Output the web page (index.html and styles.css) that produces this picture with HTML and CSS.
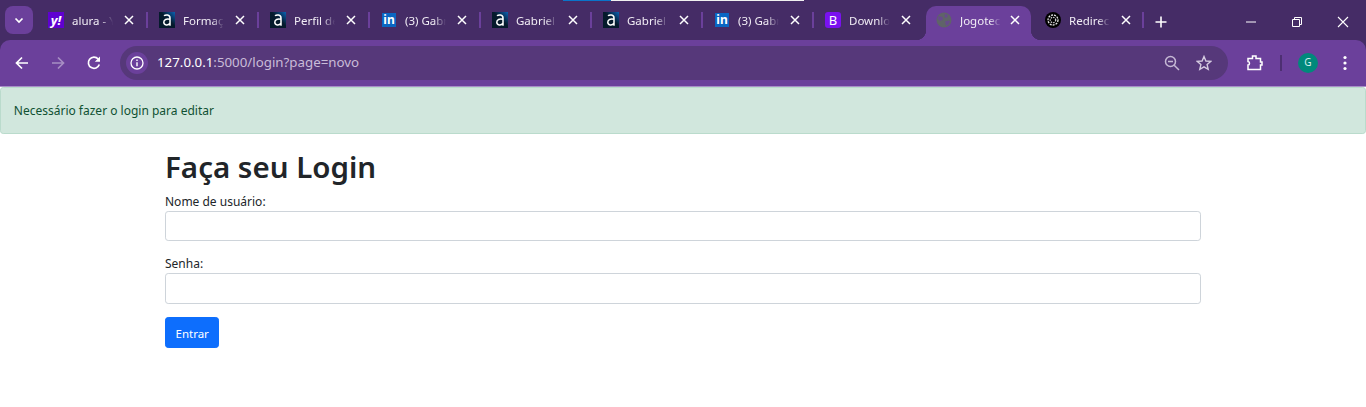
FILE: index.html
```html
<!DOCTYPE html>
<html>
<head>
  <meta charset="utf-8">
  <title>Jogoteca</title>
  <link rel="stylesheet" href="styles.css">
</head>
<body>
  <svg class="sprites" width="0" height="0">
    <defs>
      <linearGradient id="alura-bg" x1="0" y1="1" x2="1" y2="0">
        <stop offset="0.55" stop-color="#051a2c"/>
        <stop offset="1" stop-color="#0c62b4"/>
      </linearGradient>
      <symbol id="alura" viewBox="0 0 16 16">
        <rect width="16" height="16" fill="url(#alura-bg)"/>
        <path d="M5 3.800C6.500 2.500 11 2.300 11 6v7.800M11 7.300C7.500 6.500 4.800 7.500 4.800 10.300c0 3.200 4.400 3.400 6.200 1" fill="none" stroke="#fff" stroke-width="1.500"/>
      </symbol>
      <symbol id="close" viewBox="0 0 10 10">
        <path d="M1 1l8 8M9 1l-8 8" fill="none" stroke="#fff" stroke-width="1.500"/>
      </symbol>
    </defs>
  </svg>

  <header class="browser">
    <div class="tabstrip">
      <div class="other-window"><span class="other-blue"></span><span class="other-white"></span></div>
      <button class="tab-search">
        <svg width="12" height="12" viewBox="0 0 12 12"><path d="M2.500 4.500 6 8l3.500-3.500" fill="none" stroke="#fff" stroke-width="1.700"/></svg>
      </button>
      <div class="tabs">
        <div class="tab sep">
          <span class="favicon fav-yahoo">y!</span><span class="tab-title">alura - Y</span>
          <svg class="tab-close" width="10" height="10"><use href="#close"/></svg>
        </div>
        <div class="tab sep">
          <svg class="favicon" width="16" height="16"><use href="#alura"/></svg><span class="tab-title">Formaçã</span>
          <svg class="tab-close" width="10" height="10"><use href="#close"/></svg>
        </div>
        <div class="tab sep">
          <svg class="favicon" width="16" height="16"><use href="#alura"/></svg><span class="tab-title">Perfil de</span>
          <svg class="tab-close" width="10" height="10"><use href="#close"/></svg>
        </div>
        <div class="tab sep">
          <span class="favicon fav-in">in</span><span class="tab-title">(3) Gabr</span>
          <svg class="tab-close" width="10" height="10"><use href="#close"/></svg>
        </div>
        <div class="tab sep">
          <svg class="favicon" width="16" height="16"><use href="#alura"/></svg><span class="tab-title">Gabriel</span>
          <svg class="tab-close" width="10" height="10"><use href="#close"/></svg>
        </div>
        <div class="tab sep">
          <svg class="favicon" width="16" height="16"><use href="#alura"/></svg><span class="tab-title">Gabriel</span>
          <svg class="tab-close" width="10" height="10"><use href="#close"/></svg>
        </div>
        <div class="tab sep">
          <span class="favicon fav-in">in</span><span class="tab-title">(3) Gabr</span>
          <svg class="tab-close" width="10" height="10"><use href="#close"/></svg>
        </div>
        <div class="tab">
          <span class="favicon fav-boot">B</span><span class="tab-title">Downlo</span>
          <svg class="tab-close" width="10" height="10"><use href="#close"/></svg>
        </div>
        <div class="tab active">
          <svg class="favicon" width="16" height="16" viewBox="0 0 16 16"><circle cx="8" cy="8" r="7.500" fill="#5f6368"/><path d="M2.500 4 6.500 5 7 7.500 4.500 9 1.500 7ZM9 2l3 1-1.500 3-2-1ZM9 9.500l4-1 1 1-2 3.500-2 .5Z" fill="#6b409b" opacity=".7"/></svg>
          <span class="tab-title">Jogotec</span>
          <svg class="tab-close" width="10" height="10"><use href="#close"/></svg>
        </div>
        <div class="tab sep last">
          <svg class="favicon" width="16" height="16" viewBox="0 0 16 16"><circle cx="8" cy="8" r="8" fill="#000"/><circle cx="8" cy="8" r="5" fill="none" stroke="#e4e4e4" stroke-width="1.300" stroke-dasharray="2 1"/><circle cx="8" cy="8" r="2.700" fill="none" stroke="#ccc" stroke-width="1.300" stroke-dasharray="1.500 1"/></svg>
          <span class="tab-title">Redirec</span>
          <svg class="tab-close" width="10" height="10"><use href="#close"/></svg>
        </div>
      </div>
      <svg class="new-tab" width="12" height="12" viewBox="0 0 12 12"><path d="M6 .5v11M.5 6h11" stroke="#fff" stroke-width="1.600"/></svg>
      <div class="window-controls">
        <svg width="12" height="12" viewBox="0 0 12 12"><path d="M1 6h10" stroke="#fff"/></svg>
        <svg width="12" height="12" viewBox="0 0 12 12"><path d="M1.500 3.500h7v7h-7zM3.500 3.500v-2h7v7h-2" fill="none" stroke="#fff"/></svg>
        <svg width="12" height="12" viewBox="0 0 12 12"><path d="M1 1l10 10M11 1 1 11" stroke="#fff" stroke-width="1.100"/></svg>
      </div>
    </div>
    <div class="toolbar">
      <div class="nav-buttons">
        <svg width="16" height="16" viewBox="0 0 16 16"><path d="M14 8H3M8 2.500 2.500 8 8 13.500" fill="none" stroke="#fff" stroke-width="1.700"/></svg>
        <svg width="16" height="16" viewBox="0 0 16 16"><path d="M2 8h11M8 2.500 13.500 8 8 13.500" fill="none" stroke="#a78ec4" stroke-width="1.700"/></svg>
        <svg width="16" height="16" viewBox="0 0 16 16"><path d="M13.300 9.500A5.600 5.600 0 1 1 12.200 4" fill="none" stroke="#fff" stroke-width="1.700"/><path d="M14 1.500v5.200H8.800Z" fill="#fff"/></svg>
      </div>
      <div class="omnibox">
        <span class="site-info">
          <svg width="14" height="14" viewBox="0 0 14 14"><circle cx="7" cy="7" r="6" fill="none" stroke="#fff" stroke-width="1.300"/><path d="M7 6.200v4M7 3.600v1.400" stroke="#fff" stroke-width="1.400"/></svg>
        </span>
        <span class="url"><span class="url-host">127.0.0.1</span>:5000/login?page=novo</span>
        <span class="omni-icons">
          <svg width="16" height="16" viewBox="0 0 16 16"><circle cx="6.500" cy="6.500" r="5" fill="none" stroke="#c5b8d4" stroke-width="1.500"/><path d="M4 6.500h5M10.200 10.200l4.800 4.800" stroke="#c5b8d4" stroke-width="1.500"/></svg>
          <svg width="16" height="16" viewBox="0 0 16 16"><path d="m8 1.500 1.900 4.500 4.800.4-3.600 3.200 1.100 4.700L8 11.800l-4.200 2.500 1.100-4.700-3.600-3.200 4.800-.4Z" fill="none" stroke="#d5cbe0" stroke-width="1.400"/></svg>
        </span>
      </div>
      <div class="toolbar-right">
        <svg width="18" height="18" viewBox="0 0 18 18"><path d="M2 4.500h4.500V2H10v2.500h4.500V8H16v3h-1.500v4.500H2V11c2 0 2-3.500 0-3.500Z" fill="none" stroke="#fff" stroke-width="1.500"/></svg>
        <span class="toolbar-divider"></span>
        <span class="avatar">G</span>
        <svg width="4" height="16" viewBox="0 0 4 16"><circle cx="2" cy="2.500" r="1.600" fill="#fff"/><circle cx="2" cy="8" r="1.600" fill="#fff"/><circle cx="2" cy="13.500" r="1.600" fill="#fff"/></svg>
      </div>
    </div>
  </header>

  <div class="alert">Necessário fazer o login para editar</div>

  <main class="container">
    <h1>Faça seu Login</h1>
    <form>
      <div class="field">
        <label for="usuario">Nome de usuário:</label>
        <input type="text" id="usuario">
      </div>
      <div class="field">
        <label for="senha">Senha:</label>
        <input type="password" id="senha">
      </div>
      <button type="button" class="btn">Entrar</button>
    </form>
  </main>
</body>
</html>
```

FILE: styles.css
```css
body {
  font-family: "Noto Sans", "Open Sans", sans-serif;
  margin: 0;
  padding: 0;
  background-color: #fff;
  color: #212529;
  font-size: 12px;
  line-height: 19.2px;
}

.sprites {
  position: absolute;
}

.browser {
  background-color: #452c66;
}

.tabstrip {
  position: relative;
  display: flex;
  align-items: flex-end;
  height: 40px;
}

.other-window {
  position: absolute;
  top: 0;
  left: 563px;
  display: flex;
  height: 1px;
}

.other-blue {
  width: 48px;
  background-color: #0a74c9;
}

.other-white {
  width: 193px;
  background-color: #f0f0f0;
}

.tab-search {
  display: flex;
  align-items: center;
  justify-content: center;
  width: 28px;
  height: 28px;
  margin: 0 4px 6px 5px;
  padding: 0;
  border: none;
  border-radius: 8px;
  background-color: #6b409b;
}

.tabs {
  display: flex;
  height: 34px;
}

.tab {
  position: relative;
  display: flex;
  align-items: center;
  box-sizing: border-box;
  width: 111px;
  padding: 0 0 6px 11px;
  color: #f1edf5;
  font-size: 11.500px;
}

.tab.sep::after {
  content: "";
  position: absolute;
  top: 6px;
  right: 0;
  width: 2px;
  height: 16px;
  background-color: #6b409b;
}

.tab.active {
  width: 105px;
  margin: 0 3px 0 1px;
  padding-left: 10px;
  border-radius: 10px 10px 0 0;
  background-color: #6b409b;
}

.tab.active::before,
.tab.active::after {
  content: "";
  position: absolute;
  bottom: 0;
  width: 10px;
  height: 10px;
}

.tab.active::before {
  left: -10px;
  background: radial-gradient(circle at 0 0, transparent 10px, #6b409b 10.500px);
}

.tab.active::after {
  right: -10px;
  background: radial-gradient(circle at 100% 0, transparent 10px, #6b409b 10.500px);
}

.tab.last {
  width: 110px;
}

.favicon {
  display: flex;
  flex: none;
  align-items: center;
  justify-content: center;
  width: 16px;
  height: 16px;
  color: #fff;
  font-weight: 700;
  line-height: 16px;
}

.fav-yahoo {
  background-color: #5f01d1;
  font-size: 13px;
  font-style: italic;
}

.fav-in {
  width: 14px;
  height: 14px;
  margin: 0 1px;
  background-color: #0a66c2;
  font-size: 12px;
}

.fav-boot {
  border-radius: 3px;
  background-color: #7a11f0;
  font-size: 13px;
  font-weight: 400;
}

.tab-title {
  flex: none;
  overflow: hidden;
  width: 41px;
  margin-top: 1px;
  margin-left: 8px;
  white-space: nowrap;
  -webkit-mask-image: linear-gradient(to right, #000 70%, transparent);
  mask-image: linear-gradient(to right, #000 70%, transparent);
}

.tab-close {
  flex: none;
  margin-left: 11px;
}

.active .tab-close {
  margin-left: 9px;
}

.new-tab {
  margin: 0 0 12px 11px;
}

.window-controls {
  display: flex;
  gap: 34px;
  margin: 0 17px 12px auto;
}

.toolbar {
  display: flex;
  align-items: center;
  box-sizing: border-box;
  height: 47px;
  padding: 6px 0 7px 14px;
  border-bottom: 1px solid #a98ec8;
  border-radius: 10px 10px 0 0;
  background-color: #6b409b;
}

.nav-buttons {
  display: flex;
  gap: 20px;
  width: 106px;
}

.omnibox {
  display: flex;
  flex: none;
  align-items: center;
  box-sizing: border-box;
  width: 1108px;
  height: 34px;
  padding: 0 16px 0 6px;
  border-radius: 17px;
  background-color: #56387a;
  color: #c9bcd8;
  font-size: 13.300px;
}

.site-info {
  display: flex;
  align-items: center;
  justify-content: center;
  width: 22px;
  height: 22px;
  margin-right: 9px;
  border-radius: 50%;
  background-color: #6b409b;
}

.url-host {
  color: #fff;
}

.omni-icons {
  display: flex;
  gap: 16px;
  margin-left: auto;
}

.toolbar-right {
  display: flex;
  flex: 1;
  align-items: center;
  padding-left: 18px;
}

.toolbar-divider {
  width: 2px;
  height: 16px;
  margin: 0 16px 0 16px;
  background-color: #4d2f72;
}

.avatar {
  display: flex;
  align-items: center;
  justify-content: center;
  width: 20px;
  height: 20px;
  margin-right: 25px;
  border-radius: 50%;
  background-color: #00897b;
  color: #d7efec;
  font-size: 10px;
}

.alert {
  padding: 13.300px 12.800px 12.300px;
  border: 1px solid #badbcc;
  border-radius: 3.200px;
  background-color: #d1e7dd;
  color: #0f5132;
}

.container {
  width: 1036px;
  margin: 0 auto 0 165px;
}

h1 {
  margin: 14.200px 0 5.400px;
  font-size: 29.500px;
  font-weight: 600;
  line-height: 38.400px;
}

label {
  display: block;
}

input {
  display: block;
  box-sizing: border-box;
  width: 100%;
  height: 30.400px;
  border: 1px solid #ced4da;
  border-radius: 3.200px;
}

.field {
  margin-bottom: 12.800px;
}

.btn {
  height: 31px;
  padding: 2px 9.500px 0;
  border: 1px solid #0d6efd;
  border-radius: 3.200px;
  background-color: #0d6efd;
  color: #fff;
  font-family: inherit;
  font-size: 11.500px;
}
```
